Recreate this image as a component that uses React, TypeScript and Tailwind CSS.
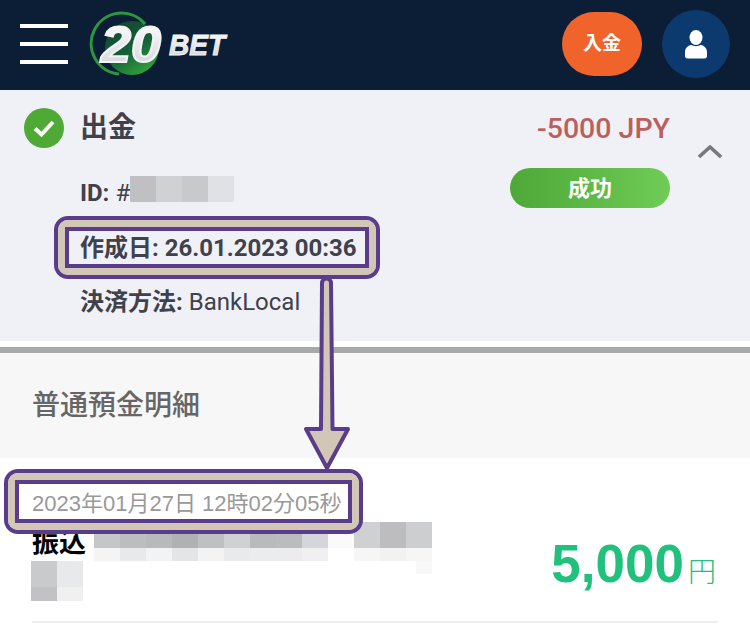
const idTiles = ['#c0c0c2', '#d0d1d3', '#c8c9cb', '#e0e1e4'];

const nameTop = ['#c5c6c8', '#bcbdbf', '#b8b9bb', '#b0b1b3', '#bfc0c2', '#d0d1d3', '#b9babc', '#bbbcbe', '#d5d6dc', '#fafafa', '#cfd0d2', '#bdbdc0', '#cdcecf'];
const nameBottom = ['#f4f4f4', '#e8e9eb', '#f3f3f3', '#e4e5e6', '#f3f3f3', '#e9eaec', '#ebecee', '#ececee', '#f0f0f2', '#ffffff', '#f6f6f7', '#f2f2f3', '#f6f6f6'];

function Logo() {
  return (
    <svg width="145" height="70" viewBox="0 0 145 70" className="ml-[19px]">
      <defs>
        <linearGradient id="metal" x1="0" y1="0" x2="0" y2="1">
          <stop offset="0" stopColor="#ffffff" />
          <stop offset="1" stopColor="#cfd2d6" />
        </linearGradient>
        <linearGradient id="sphere" x1="0" y1="0" x2="0.6" y2="1">
          <stop offset="0" stopColor="#12402f" />
          <stop offset="0.6" stopColor="#14603a" />
          <stop offset="1" stopColor="#2f9c3a" />
        </linearGradient>
      </defs>
      <circle cx="45" cy="40" r="27" fill="url(#sphere)" />
      {/* ring: open on the lower right */}
      <path d="M58 16 A30.500 30.500 0 1 0 32 66" fill="none" stroke="#2d963f" strokeWidth="3" />
      <text x="14" y="54" fontFamily="'Liberation Sans', sans-serif" fontWeight="700" fontStyle="italic" fontSize="50" fill="url(#metal)" stroke="#f2f3f4" strokeWidth="2" textLength="60" lengthAdjust="spacingAndGlyphs">
        20
      </text>
      <text x="82" y="47" fontFamily="'Liberation Sans', sans-serif" fontWeight="700" fontStyle="italic" fontSize="30" fill="url(#metal)" stroke="#f2f3f4" strokeWidth="1" textLength="56" lengthAdjust="spacingAndGlyphs">
        BET
      </text>
    </svg>
  );
}

export default function App() {
  return (
    <div className="relative h-[626px] w-[750px] overflow-hidden bg-white font-['Roboto','Noto_Sans_CJK_JP',sans-serif]">
      {/* Top bar */}
      <header className="flex h-[90px] items-center bg-[#0c1d36] pl-5 pr-5">
        <div className="-mt-[2px] flex w-12 flex-col gap-3.5">
          <div className="h-1 bg-white" />
          <div className="h-1 bg-white" />
          <div className="h-1 bg-white" />
        </div>
        <div className="-mt-1">
          <Logo />
        </div>
        <div className="ml-auto flex items-center gap-5">
          <div className="-mt-[2px] flex h-16 w-20 items-center justify-center rounded-[32px] bg-[#f0642c] text-[19px] font-bold text-white">
            入金
          </div>
          <div className="-mt-[2px] flex h-[68px] w-[68px] items-center justify-center rounded-full bg-[#0c3a6e]">
            <svg width="22" height="29" viewBox="0 0 22 29" fill="#fff">
              <ellipse cx="11" cy="7.5" rx="6.5" ry="7.5" />
              <path d="M0 22c0-4 3-6.5 6-7 3 1.500 7 1.500 10 0 3 .5 6 3 6 7v4c0 1.500-1 2.500-2.500 2.500h-17C1 28.500 0 27.500 0 26z" />
            </svg>
          </div>
        </div>
      </header>

      {/* Transaction summary */}
      <section className="flex h-[251px] bg-[#f0f1f7] pl-6 pr-7 text-[#3f414b]">
        <div className="flex-1 pt-[18px]">
          <div className="flex items-center gap-4">
            <div className="flex h-10 w-10 items-center justify-center rounded-full bg-[#4fa935]">
              <svg width="24" height="24" viewBox="0 0 24 24" fill="none" stroke="#fff" strokeWidth="4">
                <path d="M3 12.500l6.500 6L21 6" />
              </svg>
            </div>
            <span className="text-[28px] leading-10 font-bold">出金</span>
          </div>
          <div className="mt-[18px] pl-[56px] text-[24px]">
            <div className="flex h-[54.5px] items-start leading-[54.5px]">
              <span className="font-bold">ID:</span>
              <span className="ml-[6px]">#</span>
              <div className="mt-[10px]">
                <div className="flex">
                  {idTiles.map((c) => (
                    <div key={c} className="h-[26px] w-[26px]" style={{ backgroundColor: c }} />
                  ))}
                </div>
                <div className="h-2 w-[78px] bg-[#eeeff4]" />
              </div>
            </div>
            <div className="h-[54.5px] leading-[54.5px] font-bold">作成日: 26.01.2023 00:36</div>
            <div className="h-[54.5px] leading-[54.5px]">
              <span className="font-bold">決済方法:</span> BankLocal
            </div>
          </div>
        </div>
        <div className="flex w-40 flex-col items-end pt-[19px]">
          <div className="text-[28.5px] leading-10 font-medium whitespace-nowrap text-[#bc5f5c]">-5000 JPY</div>
          <div className="mt-[19px] flex h-10 w-40 items-center justify-center rounded-[20px] bg-gradient-to-r from-[#4da838] to-[#6fcc55] text-[22px] font-bold text-white">
            成功
          </div>
        </div>
        <div className="ml-7 pt-[55px]">
          <svg width="24" height="13" viewBox="0 0 24 13" fill="none" stroke="#75787f" strokeWidth="3.500">
            <path d="M1 12L12 2l11 10" />
          </svg>
        </div>
      </section>

      <div className="h-1.5 bg-white" />
      <div className="h-1.5 bg-[#a9a9a9]" />

      {/* Bank statement */}
      <div className="flex h-[105px] items-center bg-[#f7f7f7] pl-8 text-[28px] font-medium text-[#666]">普通預金明細</div>
      <section className="flex pl-[31px] pr-[34px] font-['Liberation_Sans','Noto_Sans_CJK_JP',sans-serif]">
        <div className="w-[401px] flex-none">
          <div className="pt-[34px] pl-[1px] text-[22px] leading-6 whitespace-nowrap text-[#999]">2023年01月27日 12時02分05秒</div>
          <div className="mt-[6px] flex h-[39px] items-start">
            <span className="w-[63px] flex-none pt-[5px] pl-[1px] text-[27px] leading-8 font-bold text-black">振込</span>
            <div>
              <div className="flex">
                {nameTop.map((c, i) => (
                  <div key={i} className="h-[26px] w-[26px]" style={{ backgroundColor: c }} />
                ))}
              </div>
              <div className="flex">
                {nameBottom.map((c, i) => (
                  <div key={i} className="h-[13px] w-[26px]" style={{ backgroundColor: c }} />
                ))}
              </div>
            </div>
          </div>
          <div className="flex">
            <div>
              <div className="h-[26px] w-[26px] bg-[#c9cacc]" />
              <div className="h-[14px] w-[26px] bg-[#c2c2c4]" />
            </div>
            <div>
              <div className="h-[26px] w-[26px] bg-[#e8e9ea]" />
              <div className="h-[14px] w-[26px] bg-[#f0f0f1]" />
            </div>
            <div className="ml-auto h-[13px] w-4 bg-[#f8f8f8]" />
          </div>
        </div>
        <div className="ml-auto flex items-baseline pt-[76px] text-[#22c07d]">
          <span className="text-[53px] leading-[60px] font-bold">5,000</span>
          <span className="ml-[4px] text-[28px] leading-[60px] font-light">円</span>
        </div>
      </section>
      <div className="mx-8 mt-[18px] h-[2px] bg-[#eeeeee]" />

      {/* Annotation callouts laid over the page */}
      <div className="absolute top-[216px] left-[54px] h-[63px] w-[326px] overflow-hidden rounded-[14px] border-4 border-[#5a3d8a] p-[7px]">
        <div className="h-full w-full border-4 border-[#5a3d8a] outline-8 outline-[#d2c6b6]" />
      </div>
      <div className="absolute top-[469px] left-1 h-[65px] w-[359px] overflow-hidden rounded-[14px] border-4 border-[#5a3d8a] p-[7px]">
        <div className="h-full w-full border-4 border-[#5a3d8a] outline-8 outline-[#d2c6b6]" />
      </div>
      <svg className="absolute top-[278px] left-[300px]" width="54" height="194" viewBox="0 0 54 194">
        <path
          d="M22 5 a4 4 0 0 1 9 0 L32.500 151 H48 L27 190 L6 151 H21 Z"
          fill="#d2c6b6"
          stroke="#5a3d8a"
          strokeWidth="4"
          strokeLinejoin="round"
        />
      </svg>
    </div>
  );
}
